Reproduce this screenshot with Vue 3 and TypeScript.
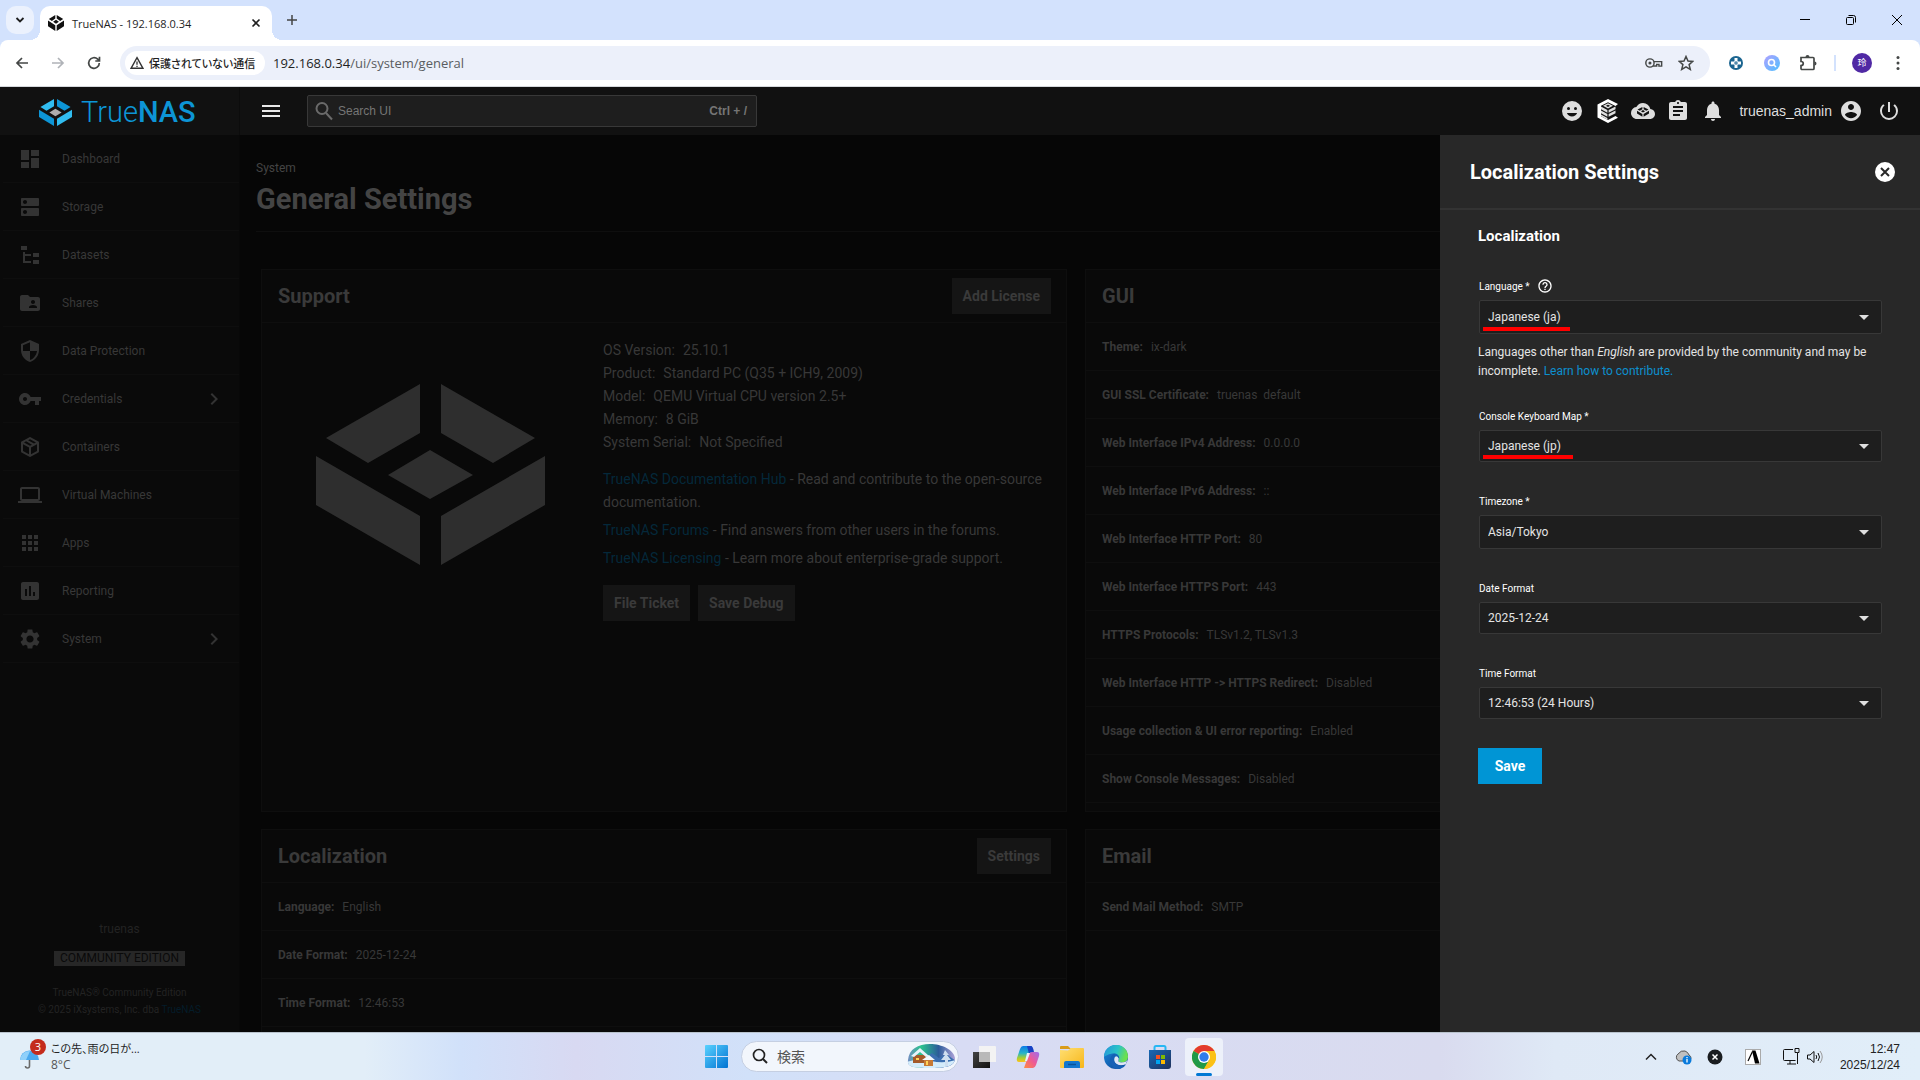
<script setup lang="ts">
interface NavItem { label: string; icon: string; expandable?: boolean }
interface Detail { label: string; value: string }
interface Field { id: string; label: string; value: string; tall?: boolean; help?: boolean; hint?: boolean; mark?: number }

const nav: NavItem[] = [
  { label: 'Dashboard', icon: 'M3 13h8V3H3v10zm0 8h8v-6H3v6zm10 0h8V11h-8v10zm0-18v6h8V3h-8z' },
  { label: 'Storage', icon: 'M20 13H4c-.55 0-1 .45-1 1v6c0 .55.45 1 1 1h16c.55 0 1-.45 1-1v-6c0-.55-.45-1-1-1zM7 19c-1.1 0-2-.9-2-2s.9-2 2-2 2 .9 2 2-.9 2-2 2zM20 3H4c-.55 0-1 .45-1 1v6c0 .55.45 1 1 1h16c.55 0 1-.45 1-1V4c0-.55-.45-1-1-1zM7 9c-1.1 0-2-.9-2-2s.9-2 2-2 2 .9 2 2-.9 2-2 2z' },
  { label: 'Datasets', icon: 'M3 3h6v4H3V3m12 7h6v4h-6v-4m0 7h6v4h-6v-4m-2-4H7v5h6v2H5V9h2v2h6v2z' },
  { label: 'Shares', icon: 'M20 6h-8l-2-2H4c-1.1 0-1.99.9-1.99 2L2 18c0 1.1.9 2 2 2h16c1.1 0 2-.9 2-2V8c0-1.1-.9-2-2-2zm-5 3c1.1 0 2 .9 2 2s-.9 2-2 2-2-.9-2-2 .9-2 2-2zm4 8h-8v-1c0-1.33 2.67-2 4-2s4 .67 4 2v1z' },
  { label: 'Data Protection', icon: 'M12 1L3 5v6c0 5.55 3.84 10.74 9 12 5.16-1.26 9-6.45 9-12V5l-9-4zm0 10.99h7c-.53 4.12-3.28 7.79-7 8.94V12H5V6.3l7-3.11v8.8z' },
  { label: 'Credentials', expandable: true, icon: 'M12.65 10C11.83 7.67 9.61 6 7 6c-3.31 0-6 2.69-6 6s2.69 6 6 6c2.61 0 4.83-1.67 5.65-4H17v4h4v-4h2v-4H12.65zM7 14c-1.1 0-2-.9-2-2s.9-2 2-2 2 .9 2 2-.9 2-2 2z' },
  { label: 'Containers', icon: 'M21 16.5c0 .38-.21.71-.53.88l-7.9 4.44c-.16.12-.36.18-.57.18s-.41-.06-.57-.18l-7.9-4.44A.991.991 0 0 1 3 16.5v-9c0-.38.21-.71.53-.88l7.9-4.44c.16-.12.36-.18.57-.18s.41.06.57.18l7.9 4.44c.32.17.53.5.53.88v9M12 4.15L10.11 5.22 16 8.61 17.96 7.5 12 4.15M6.04 7.5L12 10.85l1.96-1.1-5.88-3.4L6.04 7.5M5 15.91l6 3.38v-6.71L5 9.21v6.7m14 0v-6.7l-6 3.37v6.71l6-3.38z' },
  { label: 'Virtual Machines', icon: 'M20 18c1.1 0 2-.9 2-2V6c0-1.1-.9-2-2-2H4c-1.1 0-2 .9-2 2v10c0 1.1.9 2 2 2H0v2h24v-2h-4zM4 6h16v10H4V6z' },
  { label: 'Apps', icon: 'M4 8h4V4H4v4zm6 12h4v-4h-4v4zm-6 0h4v-4H4v4zm0-6h4v-4H4v4zm6 0h4v-4h-4v4zm6-10v4h4V4h-4zm-6 4h4V4h-4v4zm6 6h4v-4h-4v4zm0 6h4v-4h-4v4z' },
  { label: 'Reporting', icon: 'M19 3H5c-1.1 0-2 .9-2 2v14c0 1.1.9 2 2 2h14c1.1 0 2-.9 2-2V5c0-1.1-.9-2-2-2zM9 17H7v-7h2v7zm4 0h-2V7h2v10zm4 0h-2v-4h2v4z' },
  { label: 'System', expandable: true, icon: 'M19.14 12.94c.04-.3.06-.61.06-.94 0-.32-.02-.64-.07-.94l2.03-1.58c.18-.14.23-.41.12-.61l-1.92-3.32c-.12-.22-.37-.29-.59-.22l-2.39.96c-.5-.38-1.03-.7-1.62-.94l-.36-2.54c-.04-.24-.24-.41-.48-.41h-3.84c-.24 0-.43.17-.47.41l-.36 2.54c-.59.24-1.13.57-1.62.94l-2.39-.96c-.22-.08-.47 0-.59.22L2.74 8.87c-.12.21-.08.47.12.61l2.03 1.58c-.05.3-.09.63-.09.94s.02.64.07.94l-2.03 1.58c-.18.14-.23.41-.12.61l1.92 3.32c.12.22.37.29.59.22l2.39-.96c.5.38 1.03.7 1.62.94l.36 2.54c.05.24.24.41.48.41h3.84c.24 0 .44-.17.47-.41l.36-2.54c.59-.24 1.13-.56 1.62-.94l2.39.96c.22.08.47 0 .59-.22l1.92-3.32c.12-.22.07-.47-.12-.61l-2.01-1.58zM12 15.6c-1.98 0-3.6-1.62-3.6-3.6s1.62-3.6 3.6-3.6 3.6 1.62 3.6 3.6-1.62 3.6-3.6 3.6z' },
]

const support: Detail[] = [
  { label: 'OS Version:', value: '25.10.1' },
  { label: 'Product:', value: 'Standard PC (Q35 + ICH9, 2009)' },
  { label: 'Model:', value: 'QEMU Virtual CPU version 2.5+' },
  { label: 'Memory:', value: '8 GiB' },
  { label: 'System Serial:', value: 'Not Specified' },
]

const gui: Detail[] = [
  { label: 'Theme:', value: 'ix-dark' },
  { label: 'GUI SSL Certificate:', value: 'truenas\u00a0\u00a0default' },
  { label: 'Web Interface IPv4 Address:', value: '0.0.0.0' },
  { label: 'Web Interface IPv6 Address:', value: '::' },
  { label: 'Web Interface HTTP Port:', value: '80' },
  { label: 'Web Interface HTTPS Port:', value: '443' },
  { label: 'HTTPS Protocols:', value: 'TLSv1.2, TLSv1.3' },
  { label: 'Web Interface HTTP -> HTTPS Redirect:', value: 'Disabled' },
  { label: 'Usage collection & UI error reporting:', value: 'Enabled' },
  { label: 'Show Console Messages:', value: 'Disabled' },
]

const localization: Detail[] = [
  { label: 'Language:', value: 'English' },
  { label: 'Date Format:', value: '2025-12-24' },
  { label: 'Time Format:', value: '12:46:53' },
]

const email: Detail[] = [{ label: 'Send Mail Method:', value: 'SMTP' }]

const fields: Field[] = [
  { id: 'language', label: 'Language *', value: 'Japanese (ja)', tall: true, help: true, hint: true, mark: 87 },
  { id: 'keyboard', label: 'Console Keyboard Map *', value: 'Japanese (jp)', mark: 90 },
  { id: 'timezone', label: 'Timezone *', value: 'Asia/Tokyo', tall: true },
  { id: 'date-format', label: 'Date Format', value: '2025-12-24' },
  { id: 'time-format', label: 'Time Format', value: '12:46:53 (24 Hours)' },
]
</script>

<template>
  <div class="screen">
    <header class="browser">
      <div class="tabstrip">
        <button class="tab-search" aria-label="Search tabs"><svg viewBox="0 0 10 10" width="10" height="10"><path d="M1.500 3l3.500 3.500L8.500 3" fill="none" stroke="#1f1f1f" stroke-width="1.800" /></svg></button>
        <div class="tab">
          <svg class="favicon" viewBox="0 0 16 16" width="16" height="16"><path d="M7.300 0v3.600L3.900 5.900.8 3.900zM8.700 0v3.600l3.400 2.300 3.100-2zM0 5.400l7.300 4.900V16L0 11.200zM16 5.400l-7.300 4.900V16l7.300-4.800zM8 4.800l2.900 1.900L8 8.700 5.100 6.700z" fill="#111" /></svg>
          <span class="tab-title">TrueNAS - 192.168.0.34</span>
          <button class="tab-close" aria-label="Close tab"><svg viewBox="0 0 10 10" width="10" height="10"><path d="M1.500 1.500l7 7m0-7l-7 7" stroke="#1f1f1f" stroke-width="1.600" /></svg></button>
        </div>
        <button class="new-tab" aria-label="New tab"><svg viewBox="0 0 12 12" width="12" height="12"><path d="M6 1v10M1 6h10" stroke="#444" stroke-width="1.500" /></svg></button>
        <div class="window-controls">
          <button aria-label="Minimize"><svg viewBox="0 0 10 10" width="10" height="10"><path d="M0 4.500h10" stroke="#000" /></svg></button>
          <button aria-label="Restore"><svg viewBox="0 0 10 10" width="10" height="10"><rect x=".5" y="2.500" width="7" height="7" rx="1" fill="none" stroke="#000" /><path d="M2.500.5h5a2 2 0 0 1 2 2v5" fill="none" stroke="#000" /></svg></button>
          <button aria-label="Close"><svg viewBox="0 0 10 10" width="10" height="10"><path d="M0 0l10 10M10 0L0 10" stroke="#000" /></svg></button>
        </div>
      </div>
      <div class="toolbar">
        <button aria-label="Back"><svg viewBox="0 0 16 16" width="16" height="16"><path d="M14 8H3m5-5L3 8l5 5" fill="none" stroke="#444746" stroke-width="1.700" /></svg></button>
        <button aria-label="Forward"><svg viewBox="0 0 16 16" width="16" height="16"><path d="M2 8h11M8 3l5 5-5 5" fill="none" stroke="#b0b3b8" stroke-width="1.700" /></svg></button>
        <button aria-label="Reload"><svg viewBox="0 0 16 16" width="16" height="16"><path d="M13.300 8A5.300 5.300 0 1 1 11.700 4.200L13.500 6M13.500 1.800V6H9.300" fill="none" stroke="#444746" stroke-width="1.700" /></svg></button>
        <div class="omnibox">
          <button class="chip">
            <svg viewBox="0 0 14 14" width="14" height="14"><path d="M7 1.700L13 12.300H1z" fill="none" stroke="#333" stroke-width="1.400" /><path d="M7 5.500v3.300M7 9.800v1.200" stroke="#333" stroke-width="1.300" /></svg>
            <span>保護されていない通信</span>
          </button>
          <span class="url"><b>192.168.0.34</b>/ui/system/general</span>
          <span class="omni-icon"><svg viewBox="0 0 20 12" width="18" height="12"><circle cx="5.500" cy="6" r="4.600" fill="none" stroke="#444746" stroke-width="1.600" /><circle cx="5.500" cy="6" r="1.700" fill="#444746" /><path d="M9.800 4.500H18.500v5H15.500V7.500H13v1.800H9" fill="none" stroke="#444746" stroke-width="1.600" /></svg></span>
          <span class="omni-icon"><svg viewBox="0 0 16 16" width="16" height="16"><path d="M8 1.500l2 4.500 4.800.4-3.700 3.200 1.200 4.800L8 11.800l-4.300 2.600 1.200-4.800L1.200 6.400 6 6z" fill="none" stroke="#444746" stroke-width="1.500" /></svg></span>
        </div>
        <div class="extensions">
          <button aria-label="Extension"><svg viewBox="0 0 14 14" width="14" height="14"><circle cx="7" cy="7" r="7" fill="#1b6590" /><path d="M5.500 2h3v3.500H12v3H8.500V12h-3V8.500H2v-3h3.500z" fill="#fff" /><path d="M7 5v4M5 7h4" stroke="#1b6590" /></svg></button>
          <button aria-label="Search extension"><svg viewBox="0 0 16 16" width="16" height="16"><defs><linearGradient id="ext" x1="0" y1="0" x2="1" y2="1"><stop offset="0" stop-color="#b0a0ff" /><stop offset="1" stop-color="#4fc0ff" /></linearGradient></defs><circle cx="8" cy="8" r="8" fill="url(#ext)" /><circle cx="7.500" cy="7.500" r="3" fill="none" stroke="#fff" stroke-width="1.600" /><path d="M9.700 9.700l2.300 2.300" stroke="#fff" stroke-width="1.600" /></svg></button>
          <button aria-label="Extensions"><svg viewBox="0 0 18 18" width="18" height="18"><path d="M2.500 3.500h11.500a1 1 0 0 1 1 1V14.500a1 1 0 0 1-1 1H3a1 1 0 0 1-1-1V11.500c3 0 3-4 0-4V3.500z" fill="none" stroke="#444746" stroke-width="1.700" /><path d="M6.500 3a2 2 0 0 1 4 0zM15.500 7.500a2 2 0 0 1 0 4z" fill="#444746" /></svg></button>
        </div>
        <i class="divider"></i>
        <button class="profile" aria-label="Profile"><span>玲</span></button>
        <button aria-label="Menu"><svg viewBox="0 0 4 16" width="4" height="16"><g fill="#444746"><circle cx="2" cy="2.500" r="1.500" /><circle cx="2" cy="8" r="1.500" /><circle cx="2" cy="13.500" r="1.500" /></g></svg></button>
      </div>
    </header>

    <div class="app">
      <header class="topbar">
        <a class="brand" href="#" aria-label="TrueNAS home">
          <svg viewBox="0 0 229 181" width="33" height="27" preserveAspectRatio="none"><path d="M104 0v49L52 79 10 54z" fill="#31bdf0" /><path d="M125 0v49l52 30 42-25z" fill="#0d95d6" /><path d="M0 72l104 60v49L0 121z" fill="#0d95d6" /><path d="M229 72l-104 60v49l104-60z" fill="#31bdf0" /><path d="M114 66l43 25-43 24-42-24z" fill="#aeaeae" /></svg>
          <span class="brand-name">True<b>NAS</b></span>
        </a>
        <button class="hamburger" aria-label="Toggle navigation"><svg viewBox="0 0 24 24" width="24" height="24"><path d="M3 18h18v-2H3v2zm0-5h18v-2H3v2zm0-7v2h18V6H3z" fill="#e8e8e8" /></svg></button>
        <label class="search">
          <svg viewBox="0 0 18 20" width="18" height="20"><circle cx="7" cy="7.500" r="5.500" fill="none" stroke="#6a6a6a" stroke-width="2" /><path d="M11 12l6 6.500" stroke="#6a6a6a" stroke-width="2" /></svg>
          <input type="text" placeholder="Search UI" aria-label="Search UI" />
          <kbd>Ctrl + /</kbd>
        </label>
        <div class="top-actions">
          <button aria-label="Feedback"><svg viewBox="0 0 24 24" width="24" height="24"><path fill-rule="evenodd" d="M12 2a10 10 0 1 0 0 20 10 10 0 0 0 0-20zM8.500 8a1.500 1.500 0 1 1 0 3 1.500 1.500 0 0 1 0-3zm7 0a1.500 1.500 0 1 1 0 3 1.500 1.500 0 0 1 0-3zM6.900 14h10.200a5.500 5.500 0 0 1-10.200 0z" fill="#dedede" /></svg></button>
          <button class="wide" aria-label="TrueCommand"><svg viewBox="0 0 24 24" width="24" height="24"><path d="M12 0l10 5-2.500 2L12 3.200 5 6.800v10.400l7 3.800 7.500-4 2.500 1.700L12 24 1.500 18.500V5.500z" fill="#fff" /><path d="M12 4.200l5 2.600-5 2.700-5-2.700zM5 7.600l6.400 3.500v2.600L5 10.200zM5 11.600l6.400 3.500v2.600L5 14.200zM5 15.600l6.400 3.500v1.600L5 17.300zM19.500 7.600l-6.900 3.500v2.600l6.900-3.500zM19.500 11.600l-6.900 3.500v2.600l6.900-3.500z" fill="#dedede" /><path d="M12 5.700l2 1.100-2 1.100-2-1.100z" fill="#111" /></svg></button>
          <button aria-label="TrueNAS Connect"><svg viewBox="0 0 24 24" width="24" height="24"><path d="M19.350 10.040A7.490 7.490 0 0 0 12 4C9.110 4 6.600 5.640 5.350 8.040A5.994 5.994 0 0 0 0 14c0 3.310 2.690 6 6 6h13c2.760 0 5-2.240 5-5 0-2.640-2.050-4.780-4.650-4.960z" fill="#dedede" /><path d="M11.400 8v2.300L8.800 11.800 6.500 10.600zM12.600 8v2.300l2.600 1.500 2.300-1.200zM12 11l2.100 1.200-2.100 1.200-2.100-1.200zM6 11.700l5.400 3.200v2.800L6 14.500zM18 11.700l-5.400 3.200v2.800l5.400-3.200z" fill="#111" /></svg></button>
          <button aria-label="Jobs"><svg viewBox="0 0 24 24" width="24" height="24"><path d="M19 3h-4.180C14.400 1.840 13.300 1 12 1c-1.300 0-2.400.84-2.820 2H5c-1.100 0-2 .9-2 2v14c0 1.100.9 2 2 2h14c1.100 0 2-.9 2-2V5c0-1.100-.9-2-2-2zm-7 0c.55 0 1 .45 1 1s-.45 1-1 1-1-.45-1-1 .45-1 1-1zm2 14H7v-2h7v2zm3-4H7v-2h10v2zm0-4H7V7h10v2z" fill="#dedede" /></svg></button>
          <button aria-label="Alerts"><svg viewBox="0 0 24 24" width="24" height="24"><path d="M12 22c1.100 0 2-.9 2-2h-4c0 1.100.89 2 2 2zm6-6v-5c0-3.070-1.640-5.640-4.500-6.320V4c0-.83-.67-1.500-1.500-1.500s-1.500.67-1.500 1.500v.68C7.630 5.360 6 7.920 6 11v5l-2 2v1h16v-1l-2-2z" fill="#dedede" /></svg></button>
          <button class="account"><span>truenas_admin</span><svg viewBox="0 0 24 24" width="24" height="24"><path d="M12 2C6.480 2 2 6.480 2 12s4.480 10 10 10 10-4.480 10-10S17.520 2 12 2zm0 3c1.660 0 3 1.340 3 3s-1.340 3-3 3-3-1.340-3-3 1.340-3 3-3zm0 14.200c-2.500 0-4.710-1.280-6-3.220.03-1.990 4-3.080 6-3.080 1.990 0 5.970 1.090 6 3.080-1.290 1.940-3.500 3.220-6 3.220z" fill="#dedede" /></svg></button>
          <button class="power" aria-label="Power"><svg viewBox="0 0 24 24" width="24" height="24"><path d="M13 3h-2v10h2V3zm4.830 2.170l-1.420 1.420A6.920 6.920 0 0 1 19 12c0 3.870-3.130 7-7 7s-7-3.130-7-7c0-2.190 1.010-4.140 2.580-5.420L6.170 5.170A8.932 8.932 0 0 0 3 12a9 9 0 0 0 18 0c0-2.740-1.230-5.180-3.170-6.830z" fill="#dedede" /></svg></button>
        </div>
      </header>

      <div class="workspace">
        <aside class="sidebar">
          <nav>
            <a v-for="n in nav" :key="n.label" href="#" class="nav-item">
              <svg viewBox="0 0 24 24" width="24" height="24"><path :d="n.icon" fill="#333" /></svg>
              <span>{{ n.label }}</span>
              <svg v-if="n.expandable" class="chev" viewBox="0 0 24 24" width="24" height="24"><path d="M10 6L8.590 7.410 13.170 12l-4.580 4.590L10 18l6-6z" fill="#333" /></svg>
            </a>
          </nav>
          <div class="sidebar-foot">
            <span class="host">truenas</span>
            <span class="edition">COMMUNITY EDITION</span>
            <small>TrueNAS® Community Edition</small>
            <small>© 2025 iXsystems, Inc. dba <a href="#">TrueNAS</a></small>
          </div>
        </aside>

        <main class="main">
          <div class="page-head">
            <a href="#" class="crumb">System</a>
            <h1>General Settings</h1>
          </div>
          <div class="cards">
            <section class="card">
              <header><h3>Support</h3><button>Add License</button></header>
              <div class="support">
                <svg class="mark" viewBox="0 0 229 181" width="229" height="181"><path d="M104 0v49L52 79 10 54zM125 0v49l52 30 42-25zM0 72l104 60v49L0 121zM229 72l-104 60v49l104-60zM114 66l43 25-43 24-42-24z" fill="#2e2e2e" /></svg>
                <div class="support-info">
                  <ul>
                    <li v-for="s in support" :key="s.label"><span>{{ s.label }}</span><span>{{ s.value }}</span></li>
                  </ul>
                  <p><a href="#">TrueNAS Documentation Hub</a> - Read and contribute to the open-source documentation.</p>
                  <p><a href="#">TrueNAS Forums</a> - Find answers from other users in the forums.</p>
                  <p><a href="#">TrueNAS Licensing</a> - Learn more about enterprise-grade support.</p>
                  <div class="support-actions"><button>File Ticket</button><button>Save Debug</button></div>
                </div>
              </div>
            </section>
            <section class="card">
              <header><h3>GUI</h3></header>
              <ul class="details">
                <li v-for="d in gui" :key="d.label"><b>{{ d.label }}</b><span>{{ d.value }}</span></li>
              </ul>
            </section>
            <section class="card">
              <header><h3>Localization</h3><button>Settings</button></header>
              <ul class="details">
                <li v-for="d in localization" :key="d.label"><b>{{ d.label }}</b><span>{{ d.value }}</span></li>
              </ul>
            </section>
            <section class="card">
              <header><h3>Email</h3></header>
              <ul class="details">
                <li v-for="d in email" :key="d.label"><b>{{ d.label }}</b><span>{{ d.value }}</span></li>
              </ul>
            </section>
          </div>
        </main>

        <aside class="panel">
          <header>
            <h2>Localization Settings</h2>
            <button aria-label="Close panel"><svg viewBox="0 0 24 24" width="24" height="24"><circle cx="12" cy="12" r="10" fill="#fff" /><path d="M8 8l8 8m0-8l-8 8" stroke="#282828" stroke-width="2" /></svg></button>
          </header>
          <form @submit.prevent>
            <h4>Localization</h4>
            <div v-for="f in fields" :key="f.id" class="field">
              <div class="field-label">
                <label :for="f.id">{{ f.label }}</label>
                <svg v-if="f.help" viewBox="0 0 24 24" width="16" height="16"><path d="M11 18h2v-2h-2v2zm1-16C6.480 2 2 6.480 2 12s4.480 10 10 10 10-4.480 10-10S17.520 2 12 2zm0 18c-4.410 0-8-3.590-8-8s3.590-8 8-8 8 3.590 8 8-3.590 8-8 8zm0-14c-2.210 0-4 1.790-4 4h2c0-1.100.9-2 2-2s2 .9 2 2c0 2-3 1.750-3 5h2c0-2.250 3-2.500 3-5 0-2.210-1.790-4-4-4z" fill="#fff" /></svg>
              </div>
              <div class="select-wrap" :class="{ tall: f.tall }">
                <select :id="f.id"><option>{{ f.value }}</option></select>
                <svg viewBox="0 0 10 5" width="10" height="5"><path d="M0 0h10L5 5z" fill="#e0e0e0" /></svg>
                <i v-if="f.mark" class="underline" :style="{ width: f.mark + 'px' }"></i>
              </div>
              <p v-if="f.hint" class="hint">Languages other than <em>English</em> are provided by the community and may be incomplete. <a href="#">Learn how to contribute.</a></p>
            </div>
            <button class="save" type="submit">Save</button>
          </form>
        </aside>
      </div>
    </div>

    <footer class="taskbar">
      <button class="weather">
        <span class="weather-icon">
          <svg viewBox="0 0 20 20" width="20" height="20"><path d="M9.500 9v8a2 2 0 0 1-4 0" fill="none" stroke="#6b6b6b" stroke-width="1.600" /><path d="M0 11A9.500 9.500 0 0 1 19 11z" fill="#4aa8ee" /><path d="M0 11A9.500 9.500 0 0 1 10 2L6 11z" fill="#8fd0fa" /></svg>
          <i>3</i>
        </span>
        <span class="weather-text"><span>この先、雨の日が...</span><small>8°C</small></span>
      </button>
      <div class="pinned">
        <button aria-label="Start"><svg viewBox="0 0 23 23" width="23" height="23"><defs><linearGradient id="win" x1="0" y1="0" x2="1" y2="1"><stop offset="0" stop-color="#5ad2ff" /><stop offset="1" stop-color="#0072d2" /></linearGradient></defs><path d="M1 0h10v11H0V1a1 1 0 0 1 1-1zM12 0h10a1 1 0 0 1 1 1v10H12zM0 12h11v11H1a1 1 0 0 1-1-1zM12 12h11v10a1 1 0 0 1-1 1H12z" fill="url(#win)" /></svg></button>
        <button class="task-search">
          <svg viewBox="0 0 16 16" width="16" height="16"><circle cx="7" cy="7" r="5.500" fill="none" stroke="#222" stroke-width="1.700" /><path d="M11 11l4 4" stroke="#222" stroke-width="2" /></svg>
          <span>検索</span>
          <svg viewBox="0 0 50 26" width="50" height="26">
            <defs><clipPath id="scene"><path d="M2 17C3 6 12 1 24 1s24 6 25 14c0 7-6 10-24 10S1 24 2 17z" /></clipPath><linearGradient id="sky" x1="0" y1="0" x2="1" y2="0"><stop offset="0" stop-color="#7d83c9" /><stop offset=".3" stop-color="#2bc48e" /><stop offset=".65" stop-color="#2b5c9a" /><stop offset="1" stop-color="#b7a8dc" /></linearGradient></defs>
            <g clip-path="url(#scene)"><rect width="50" height="26" fill="url(#sky)" /><path d="M18 16l8-6 7 5 7-4 10 7v8H14z" fill="#3b6fb0" /><path d="M0 19q12-4 25-1t25-1v9H0z" fill="#d4ecfb" /><path d="M7 12h13v8H7z" fill="#a35a2b" /><path d="M5 13l9-8 9 8-3 1-6-5-6 5z" fill="#e6f2fb" /><path d="M18 17h9v6h-9z" fill="#c77a35" /><path d="M16 17l7-5 6 5z" fill="#f2f8fd" /><path d="M10 15h3v2h-3zM20 18h2v4h-2z" fill="#ffd257" /><path d="M39 7l4 5h-2l4 5h-3v6h-3v-6h-4l4-5h-2z" fill="#cfdff0" /></g>
          </svg>
        </button>
        <button aria-label="Task view"><svg viewBox="0 0 24 24" width="24" height="24"><defs><linearGradient id="dark" x1="0" y1="0" x2="1" y2="1"><stop offset="0" stop-color="#444" /><stop offset="1" stop-color="#111" /></linearGradient></defs><path d="M1 7h17v16H1z" fill="url(#dark)" /><path d="M7 1h16a1 1 0 0 1 1 1v15H7z" fill="#f3f3f3" /><path d="M7 7h11v10H7z" fill="#b9b9b9" /></svg></button>
        <button aria-label="Copilot"><svg viewBox="0 0 24 24" width="24" height="24"><defs><linearGradient id="cpa" x1="0" y1="0" x2="0" y2="1"><stop offset="0" stop-color="#0c7be8" /><stop offset=".45" stop-color="#27b5c9" /><stop offset=".75" stop-color="#a9cf2f" /><stop offset="1" stop-color="#ffc21a" /></linearGradient><linearGradient id="cpb" x1="1" y1="0" x2="0" y2="1"><stop offset="0" stop-color="#9d6ef0" /><stop offset=".5" stop-color="#ee5a94" /><stop offset="1" stop-color="#ff8b3d" /></linearGradient></defs><path d="M7 1h9l-5 14q-1 2-3 2H3q-3 0-2-4l3-9q1-3 3-3z" fill="url(#cpa)" /><path d="M17 23H8l5-14q1-2 3-2h5q3 0 2 4l-3 9q-1 3-3 3z" fill="url(#cpb)" /><path d="M11 1h4q2 0 3 6h-2q-2 0-3 2z" fill="#1741c4" /><path d="M11 8h3l-3 8h-2z" fill="#e8f2fb" /></svg></button>
        <button aria-label="File Explorer"><svg viewBox="0 0 24 24" width="24" height="24"><defs><linearGradient id="fold" x1="0" y1="0" x2="1" y2="1"><stop offset="0" stop-color="#ffdf72" /><stop offset="1" stop-color="#f7b61a" /></linearGradient></defs><path d="M0 2q0-1 1-1h7l3 3H0z" fill="#d99c1a" /><path d="M0 5l8 .5L11 3h12q1 0 1 1v18q0 1-1 1H1q-1 0-1-1z" fill="url(#fold)" /><path d="M4 23v-5q0-2 2-2h12q2 0 2 2v5z" fill="#1277cf" /><path d="M8 19.500h8" stroke="#0a5299" stroke-width="1.500" /></svg></button>
        <button aria-label="Edge"><svg viewBox="0 0 24 24" width="24" height="24"><defs><linearGradient id="ea" x1="0" y1="0" x2="1" y2=".3"><stop offset="0" stop-color="#2493da" /><stop offset=".6" stop-color="#2bc3c8" /><stop offset="1" stop-color="#6ae04f" /></linearGradient><linearGradient id="eb" x1="0" y1="0" x2="1" y2="1"><stop offset="0" stop-color="#1b8ade" /><stop offset="1" stop-color="#0b3f8c" /></linearGradient></defs><circle cx="12" cy="12" r="12" fill="url(#eb)" /><path d="M0 12A12 12 0 0 1 24 11.500C24 16 20.500 17.500 17.500 17.500c-2.500 0-3.800-1.200-3-2.300 2-3-.3-6.700-4.500-6.700C5 8.500 1 11 0 12z" fill="url(#ea)" /><path d="M14.500 15.200c-.8 1.100.5 2.300 3 2.300 2.500 0 4.500-1 5.700-2.300a12 12 0 0 1-1.500 4q-5 2.300-8.700 0t-2.500-6.500q1-2.500 3-1 2 1.500 1 3.500z" fill="#dfe6f5" /><path d="M10 8.500Q4 13 7 19t9 5q4-1 6-4.500-5 2.500-9 0t-3-7q.5-2 2-2.500-1-1.300-2-1.500z" fill="#1560b5" /></svg></button>
        <button aria-label="Microsoft Store"><svg viewBox="0 0 24 24" width="24" height="24"><defs><linearGradient id="st" x1="0" y1="0" x2="1" y2="1"><stop offset="0" stop-color="#1668b5" /><stop offset="1" stop-color="#20315c" /></linearGradient></defs><path d="M6.500 6V2.500q0-1.500 1.500-1.500h8q1.500 0 1.500 1.500V6" fill="none" stroke="#27b7f3" stroke-width="2" /><path d="M1 5h22v16q0 3-3 3H4q-3 0-3-3z" fill="url(#st)" /><path d="M8 10h4v4H8z" fill="#f25022" /><path d="M13 10h4v4h-4z" fill="#7fba00" /><path d="M8 15h4v4H8z" fill="#00a4ef" /><path d="M13 15h4v4h-4z" fill="#ffb900" /></svg></button>
        <button class="active" aria-label="Chrome"><svg viewBox="0 0 24 24" width="24" height="24"><circle cx="12" cy="12" r="12" fill="#fbc116" /><path d="M12 12L1.600 6A12 12 0 0 1 22.400 6z" fill="#e33b2e" /><path d="M12 12L1.600 6A12 12 0 0 0 12 24l5.200-9z" fill="#209a48" /><path d="M12 6h10.400A12 12 0 0 1 12 24l5.200-9z" fill="#fbc116" /><circle cx="12" cy="12" r="6" fill="#fff" /><circle cx="12" cy="12" r="4.700" fill="#2f7ceb" /></svg></button>
      </div>
      <div class="tray">
        <button aria-label="Hidden icons"><svg viewBox="0 0 12 8" width="12" height="8"><path d="M1 6.500L6 1.500l5 5" fill="none" stroke="#222" stroke-width="1.500" /></svg></button>
        <svg viewBox="0 0 17 16" width="17" height="16"><path d="M4 12A4 4 0 0 1 3 5Q6 1 10 2q3 1 4 4 2 1 2 3t-2 3z" fill="#c0c0c0" stroke="#555" /><circle cx="12" cy="11" r="4.500" fill="#0a7bdc" /><path d="M12 10v3.500M12 8v1.200" stroke="#fff" stroke-width="1.300" /></svg>
        <svg viewBox="0 0 16 16" width="16" height="16"><circle cx="8" cy="8" r="7.500" fill="#1a1d20" /><path d="M5.500 5.500l5 5m0-5l-5 5" stroke="#fff" stroke-width="1.500" /></svg>
        <svg viewBox="0 0 16 16" width="16" height="16"><rect x=".5" y=".5" width="15" height="15" fill="#fff" stroke="#aaa" /><path d="M7 1.500h3.500L14.500 14.500H10z" fill="#000" /><path d="M3 12L7.500 2.500" stroke="#000" stroke-width="1.200" /></svg>
        <svg viewBox="0 0 17 17" width="17" height="17"><path d="M10 1.500H1.500a1 1 0 0 0-1 1v9a1 1 0 0 0 1 1h11M7 12.500V16M4 16h9M12 .5h4v4h-1.500V16M12 .5v4h2.500" fill="none" stroke="#111" /></svg>
        <svg viewBox="0 0 16 14" width="16" height="14"><path d="M.5 5h2.500L7 1.500v11L3 9H.5zM9 5q1.500 2 0 4M11 3q3 4 0 8" fill="none" stroke="#111" /><path d="M13 1q4.500 6 0 12" fill="none" stroke="#999" /></svg>
        <time><span>12:47</span><span>2025/12/24</span></time>
      </div>
    </footer>
  </div>
</template>

<style>
body { margin: 0; background: #050505; }
</style>

<style scoped>
.screen { --ui: Roboto, "Liberation Sans", sans-serif; --win: "Open Sans", "Noto Sans CJK JP", sans-serif; height: 100vh; display: flex; flex-direction: column; overflow: hidden; font-family: var(--ui); font-size: 12px; }
* { box-sizing: border-box; }
button { border: 0; padding: 0; background: none; font: inherit; color: inherit; display: flex; align-items: center; justify-content: center; }
svg { display: block; flex: none; }
a { text-decoration: none; color: inherit; }
ul { list-style: none; margin: 0; padding: 0; }
h1, h2, h3, h4, p { margin: 0; }
i { font-style: normal; }

.browser { font-family: var(--win); flex: none; background: #d3e2fd; }
.tabstrip { height: 40px; display: flex; align-items: center; padding-left: 6px; }
.tab-search { width: 28px; height: 28px; border-radius: 10px; background: #ebf1fd; }
.tab { position: relative; align-self: flex-end; width: 232px; height: 34px; margin-left: 6px; padding: 0 8px; border-radius: 10px 10px 0 0; background: #fff; display: flex; align-items: center; }
.tab::before, .tab::after { content: ""; position: absolute; bottom: 0; width: 10px; height: 10px; }
.tab::before { left: -10px; background: radial-gradient(circle at 0 0, transparent 10px, #fff 10px); }
.tab::after { right: -10px; background: radial-gradient(circle at 100% 0, transparent 10px, #fff 10px); }
.tab-title { flex: 1; margin-left: 8px; color: #1f1f1f; font-size: 11px; white-space: nowrap; }
.tab-close { width: 16px; height: 16px; }
.new-tab { width: 28px; height: 28px; margin-left: 6px; }
.window-controls { margin-left: auto; display: flex; }
.window-controls button { width: 46px; height: 40px; }
.toolbar { height: 47px; display: flex; align-items: center; padding: 0 4px; background: #fff; border-bottom: 1px solid #d5d8dc; border-radius: 8px 8px 0 0; }
.toolbar button { width: 36px; height: 34px; }
.omnibox { flex: 1; height: 34px; margin: 0 8px; padding: 0 8px 0 5px; border-radius: 17px; background: #ecf0fa; display: flex; align-items: center; }
.toolbar .chip { width: 140px; height: 24px; padding: 0 0 0 5px; border-radius: 12px; background: #fff; justify-content: flex-start; gap: 5px; color: #1f1f1f; font-size: 11px; font-weight: 500; white-space: nowrap; font-feature-settings: "palt"; }
.url { flex: 1; margin-left: 8px; font-size: 13px; color: #5a5d61; }
.url b { font-weight: 400; color: #1f1f1f; }
.omni-icon { width: 32px; display: flex; justify-content: center; }
.extensions { display: flex; }
.divider { width: 2px; height: 16px; margin: 0 8px; background: #d3e2fd; }
.profile span { width: 20px; height: 20px; border-radius: 50%; background: #5029a4; color: #fff; font-size: 9px; line-height: 20px; text-align: center; }

.app { flex: 1; min-height: 0; display: flex; flex-direction: column; background: #060606; }
.topbar { flex: none; height: 48px; display: flex; align-items: center; background: #111; color: #dedede; }
.brand { width: 240px; height: 48px; padding: 2px 0 0 39px; display: flex; align-items: center; gap: 9px; border-right: 1px solid #0c0c0c; }
.brand-name { color: #0d95d6; font-size: 29px; line-height: 30px; font-weight: 300; }
.brand-name b { font-weight: 500; }
.hamburger { width: 24px; margin-left: 19px; }
.search { width: 450px; height: 32px; margin-left: 24px; padding: 0 9px 0 7px; border: 1px solid #383838; border-radius: 2px; background: #1e1e1e; display: flex; align-items: center; font-family: "Liberation Sans", sans-serif; }
.search input { flex: 1; min-width: 0; margin-left: 5px; padding: 0; border: 0; outline: 0; background: none; color: #ddd; font: inherit; }
.search input::placeholder { color: #757575; opacity: 1; }
.search kbd { font: bold 12px "Liberation Sans", sans-serif; color: #757575; }
.top-actions { margin-left: auto; padding-right: 19px; display: flex; align-items: center; gap: 11px; }
.wide { width: 25px; }
.account { margin-left: 3px; gap: 7px; font-family: "Liberation Sans", sans-serif; font-size: 14px; }
.power { margin-left: 3px; }

.workspace { flex: 1; min-height: 0; display: flex; position: relative; overflow: hidden; }
.sidebar { flex: none; width: 240px; display: flex; flex-direction: column; justify-content: space-between; background: #0a0a0a; color: #383838; border-right: 1px solid #080808; }
.nav-item { height: 48px; margin-left: 3px; padding: 0 13px 0 15px; display: flex; align-items: center; border-bottom: 1px solid #0e0e0e; }
.nav-item span { flex: 1; margin-left: 20px; }
.sidebar-foot { padding-bottom: 14px; display: flex; flex-direction: column; align-items: center; color: #232323; }
.host { line-height: 16px; }
.edition { margin: 14px 0 18px; padding: 0 6px; background: #272727; color: #0a0a0a; line-height: 15px; }
.sidebar-foot small { font-size: 10px; line-height: 17px; }
.support-info a { color: #04283a; }
.sidebar-foot a { color: #041c29; }

.main { flex: 1; min-width: 0; padding: 25px 24px 0 16px; color: #383838; }
.page-head { padding-bottom: 14px; border-bottom: 1px solid #0e0e0e; }
.crumb { display: block; line-height: 16px; margin-bottom: 5px; color: #444; }
h1 { font: bold 29px/36px var(--ui); color: #444; }
.cards { margin: 37px 5px 0; display: grid; grid-template-columns: 1fr 1fr; gap: 17px 18px; }
.card { background: #090909; border: 1px solid #0e0e0e; padding-bottom: 8px; }
.card > header { height: 53px; padding: 0 15px 0 16px; display: flex; align-items: center; justify-content: space-between; border-bottom: 1px solid #0e0e0e; }
.card h3 { font: bold 20px/28px var(--ui); color: #3a3a3a; }
.card button { height: 36px; padding: 0 11px; background: #151515; color: #3a3a3a; font-size: 14px; font-weight: 700; }
.details li { height: 48px; padding: 0 16px; display: flex; align-items: center; gap: 8px; border-bottom: 1px solid #0e0e0e; }
.support { display: flex; padding: 16px 16px 0 54px; font-size: 14px; line-height: 23px; }
.mark { margin: 45px 58px 0 0; }
.support-info { flex: 1; min-width: 0; }
.support-info li { display: flex; gap: 8px; }
.support-info ul { margin-bottom: 14px; }
.support-info p { margin-bottom: 5px; }
.support-actions { display: flex; gap: 8px; margin-top: 15px; }

.panel { position: absolute; top: 0; right: 0; bottom: 0; width: 480px; background: #282828; color: #fff; overflow: hidden; }
.panel > header { height: 75px; padding: 0 23px 0 30px; display: flex; align-items: center; justify-content: space-between; border-bottom: 2px solid #333; }
h2 { font: bold 20px/28px var(--ui); }
.panel form { padding: 14px 38px 0; }
h4 { font-size: 15px; line-height: 24px; margin-bottom: 30px; }
.field { margin-bottom: 31px; }
.field-label { height: 16px; margin: 0 0 6px 1px; display: flex; align-items: center; gap: 7px; font-size: 10px; }
.select-wrap { position: relative; height: 32px; margin-left: 1px; border: 1px solid #383838; border-radius: 2px; background: #1e1e1e; display: flex; align-items: center; padding-right: 12px; }
.select-wrap.tall { height: 34px; }
select { flex: 1; height: 100%; padding: 0 8px; border: 0; appearance: none; background: none; color: #e4e4e4; font: 12px var(--ui); }
.underline { position: absolute; left: 3px; bottom: 2px; height: 4px; background: #f00; }
.hint { margin: 9px 0 -4px; line-height: 19px; color: #e4e4e4; }
.hint a { color: #0d8fce; }
.save { width: 64px; height: 36px; margin-top: -2px; background: #0095d5; color: #fff; font-size: 14px; font-weight: 700; }

.taskbar { flex: none; height: 48px; display: grid; grid-template-columns: 1fr auto 1fr; align-items: center; border-top: 1px solid #b9c3cd; font-family: var(--win); color: #222; background: linear-gradient(90deg, #e2eef8 0%, #e2eef8 19%, #d1e1fa 24%, #d8d9f2 30%, #d1e1f9 39%, #d8dcf4 50%, #d9dbef 75%, #dfe9f6 81%, #e1eef9 100%); }
.weather { justify-self: start; padding-left: 20px; gap: 11px; text-align: left; }
.weather-icon { position: relative; padding-top: 4px; }
.weather-icon i { position: absolute; left: 10px; top: -6px; width: 16px; height: 16px; border-radius: 50%; background: #c42b1c; color: #fff; font-size: 11px; line-height: 16px; text-align: center; }
.weather-text { display: flex; flex-direction: column; font-size: 11px; line-height: 16px; font-feature-settings: "palt"; }
.weather-text small { font-size: 12px; color: #555; }
.pinned { display: flex; align-items: center; }
.pinned button { width: 44px; height: 40px; }
.pinned .task-search { width: 218px; height: 31px; margin: 0 3px; padding: 0 2px 2px 10px; border-radius: 16px; background: #f2f6fc; border: 1px solid #c5cfe2; font-size: 14px; color: #555; }
.task-search span { flex: 1; text-align: left; margin-left: 9px; }
.pinned .active { position: relative; width: 38px; height: 38px; margin: 0 3px; border-radius: 4px; background: #edf1fa; }
.active::after { content: ""; position: absolute; left: 11px; bottom: 0; width: 16px; height: 3px; border-radius: 2px; background: #0078d4; }
.tray { justify-self: end; display: flex; align-items: center; padding-right: 20px; }
.tray > svg:nth-of-type(1) { margin: 0 15px 0 18px; }
.tray > svg:nth-of-type(2) { margin-right: 22px; }
.tray > svg:nth-of-type(3) { margin-right: 22px; }
.tray > svg:nth-of-type(4) { margin-right: 7px; }
.tray time { margin-left: 17px; display: flex; flex-direction: column; align-items: flex-end; font-family: "Liberation Sans", sans-serif; line-height: 16px; }
</style>
